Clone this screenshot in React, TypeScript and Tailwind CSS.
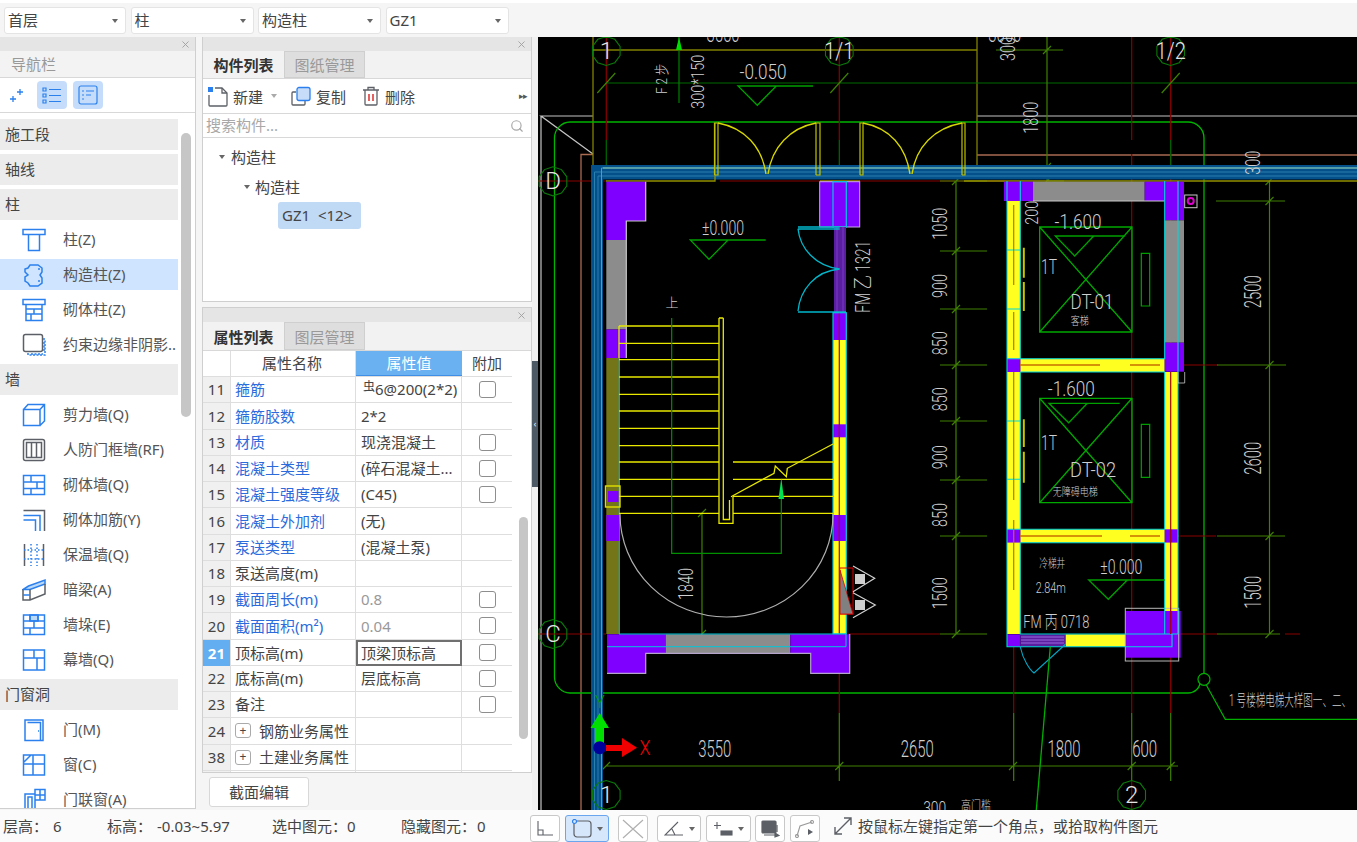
import { X, Search } from "lucide-react";
import type { ReactNode } from "react";

const BLUE = "#2b80ee";
const GREY = "#5c6066";

function Ic({ children }: { children: ReactNode }) {
  return (
    <svg width="24" height="24" viewBox="0 0 24 24" fill="none" stroke={BLUE} strokeWidth="1.5">
      {children}
    </svg>
  );
}

const navIcons: Record<string, ReactNode> = {
  column: <Ic><path d="M1 1.5H23V6.5H1ZM6.5 6.5V22.5H17.5V6.5" /></Ic>,
  gz: <Ic><path d="M8 2H16L20 5V9L18 12L20 15V20L16 23H8L6 20L3 18V14L6 12L3 9V6L6 5Z" /><path d="M16 6H18M16 18H18" /></Ic>,
  brickCol: <Ic><path d="M1 1.5H23V6.5H1ZM4 6.5V22.5H20V6.5M4 11H20M4 16H20M12 11V16M9 16V22" /></Ic>,
  edge: <Ic><rect x="1.5" y="1.5" width="19" height="17" rx="2" stroke={GREY} /><path d="M21 6H23V22H6V20M9 21H21M22 9V19" strokeDasharray="2 1.5" /></Ic>,
  shear: <Ic><path d="M1.5 6.5H18V22.5H1.5ZM1.5 6.5L6 1.5H22.5V18L18 22.5M18 6.5L22.5 1.5" /></Ic>,
  frame: <Ic><rect x="1.5" y="1.5" width="21" height="21" rx="2" stroke={GREY} /><path d="M4.5 4.5H19.5V19.5H4.5ZM9.5 4.5V19.5M14.5 4.5V19.5" stroke={GREY} /></Ic>,
  brick: <Ic><path d="M1.5 2.5H22.5V21.5H1.5ZM1.5 9H22.5M1.5 15.5H22.5M9 2.5V9M15 9V15.5M9 15.5V21.5" /></Ic>,
  rebar: <Ic><path d="M1.5 2.5H22.5V23" stroke={GREY} /><path d="M1.5 7.5H18V23M1.5 12H13.5V23" /></Ic>,
  insul: <Ic><path d="M2.5 1V23M21.5 1V23" stroke={GREY} /><path d="M9 1V23M15 1V23M2 7H22M2 16H22" strokeDasharray="1.5 2" /></Ic>,
  beam: <Ic><path d="M6.5 8L23 2V6L8 11.5H1L6.5 8Z" fill="#bcd9f7" /><path d="M8 11.5V22M1 11.5V22H8L23 16V6" stroke={GREY} /><path d="M1 17H8" /></Ic>,
  pier: <Ic><path d="M8 2H16V8H8Z" fill="#bcd9f7" /><path d="M1.5 2H22.5V21.5H1.5ZM1.5 8H22.5M1.5 15H22.5M8 2V8M16 2V8M12 8V15M8 15V21.5" /></Ic>,
  curtain: <Ic><path d="M1.5 2H22.5V22H1.5ZM1.5 10H22.5M12 2V10M15 10V22" /></Ic>,
  door: <Ic><path d="M3 2H21V22.5H3ZM5.5 4.5H18.5V22.5" /><path d="M16 13H17" /></Ic>,
  window: <Ic><path d="M1.5 2H22.5V22H1.5ZM1.5 11H22.5M11 2V22M2 9L9 2" /></Ic>,
  doorWin: <Ic><path d="M3 24V6H13V24M6 24V9H10V24M13 1.5H23V12H13ZM18 1.5V12M13 7H23" /></Ic>,
};

type NavRow = { label: string; section?: boolean; icon?: string; active?: boolean };

const navRows: NavRow[] = [
  { label: "施工段", section: true },
  { label: "轴线", section: true },
  { label: "柱", section: true },
  { label: "柱(Z)", icon: "column" },
  { label: "构造柱(Z)", icon: "gz", active: true },
  { label: "砌体柱(Z)", icon: "brickCol" },
  { label: "约束边缘非阴影..", icon: "edge" },
  { label: "墙", section: true },
  { label: "剪力墙(Q)", icon: "shear" },
  { label: "人防门框墙(RF)", icon: "frame" },
  { label: "砌体墙(Q)", icon: "brick" },
  { label: "砌体加筋(Y)", icon: "rebar" },
  { label: "保温墙(Q)", icon: "insul" },
  { label: "暗梁(A)", icon: "beam" },
  { label: "墙垛(E)", icon: "pier" },
  { label: "幕墙(Q)", icon: "curtain" },
  { label: "门窗洞", section: true },
  { label: "门(M)", icon: "door" },
  { label: "窗(C)", icon: "window" },
  { label: "门联窗(A)", icon: "doorWin" },
];

type PropRow = {
  no: string;
  name: string;
  link?: boolean;
  value?: ReactNode;
  check?: boolean;
  muted?: boolean;
  expand?: boolean;
  selected?: boolean;
};

const propRows: PropRow[] = [
  { no: "11", name: "箍筋", link: true, check: true, value: <><span className="relative -top-[3px] ml-[2px] text-[12px]">虫</span>6@200(2*2)</> },
  { no: "12", name: "箍筋胶数", link: true, value: "2*2" },
  { no: "13", name: "材质", link: true, value: "现浇混凝土", check: true },
  { no: "14", name: "混凝土类型", link: true, value: "(碎石混凝土...", check: true },
  { no: "15", name: "混凝土强度等级", link: true, value: "(C45)", check: true },
  { no: "16", name: "混凝土外加剂", link: true, value: "(无)" },
  { no: "17", name: "泵送类型", link: true, value: "(混凝土泵)" },
  { no: "18", name: "泵送高度(m)" },
  { no: "19", name: "截面周长(m)", link: true, value: "0.8", check: true, muted: true },
  { no: "20", name: "截面面积(m²)", link: true, value: "0.04", check: true, muted: true },
  { no: "21", name: "顶标高(m)", value: "顶梁顶标高", check: true, selected: true },
  { no: "22", name: "底标高(m)", value: "层底标高", check: true },
  { no: "23", name: "备注", check: true },
  { no: "24", name: "钢筋业务属性", expand: true },
  { no: "38", name: "土建业务属性", expand: true },
];

function Caret({ className = "" }: { className?: string }) {
  return <span className={`inline-block h-0 w-0 border-x-[3.5px] border-t-[4px] border-x-transparent border-t-[#666] ${className}`} />;
}

function Dropdown({ label, width }: { label: string; width: string }) {
  return (
    <div className={`flex h-[27px] items-center justify-between rounded-[3px] border border-[#e4e4e4] bg-white pl-[3px] pr-[7px] text-[15px] text-[#444] ${width}`}>
      <span>{label}</span>
      <Caret />
    </div>
  );
}

function TitleStrip() {
  return (
    <div className="flex h-[14px] shrink-0 items-center justify-end bg-[#e5e5e5] pr-[4px]">
      <X size={11} color="#a0a0a0" />
    </div>
  );
}

function Tabs({ first, second, height }: { first: string; second: string; height: string }) {
  return (
    <div className={`flex shrink-0 items-stretch border-b border-[#d8d8d8] bg-[#f2f2f2] text-[15px] ${height}`}>
      <div className="flex w-[81px] items-center justify-center pt-[2px] font-bold text-[#333]">{first}</div>
      <div className="flex w-[81px] items-center justify-center border border-[#cfcfcf] bg-[#dedede] pt-[2px] text-[#999]">{second}</div>
    </div>
  );
}

function NavPanel() {
  return (
    <div className="flex h-[772px] w-[196px] shrink-0 flex-col border-r border-b border-[#cfcfcf] bg-white">
      <TitleStrip />
      <div className="flex h-[27px] shrink-0 items-center border-b border-[#d8d8d8] bg-[#f3f3f3] pl-[11px] text-[15px] text-[#999]">导航栏</div>
      <div className="flex h-[35px] shrink-0 items-center gap-[6px] border-b border-[#d8d8d8] pl-[8px]">
        <svg width="18" height="18" viewBox="0 0 18 18" stroke={BLUE} strokeWidth="1.3" fill="none">
          <path d="M12 3V9M9 6H15M5 10V16M2 13H8" />
        </svg>
        <div className="ml-[5px] flex h-[28px] w-[30px] items-center justify-center rounded-[4px] bg-[#c5ddfa]">
          <svg width="20" height="18" viewBox="0 0 20 18" stroke={BLUE} strokeWidth="1.2" fill="none">
            <path d="M1 2H4V5H1ZM1 8H4V11H1ZM1 14H4V17H1ZM7 3.5H19M7 9.5H19M7 15.5H19" />
          </svg>
        </div>
        <div className="flex h-[28px] w-[30px] items-center justify-center rounded-[4px] bg-[#c5ddfa]">
          <svg width="20" height="20" viewBox="0 0 20 20" stroke={BLUE} strokeWidth="1.2" fill="none">
            <rect x="1" y="1" width="18" height="18" rx="2" />
            <path d="M4 6H6M8 6H16M4 10H6M8 10H13M4 14H6" />
          </svg>
        </div>
      </div>
      <div className="flex min-h-0 flex-1 overflow-hidden">
        <div className="flex w-[178px] shrink-0 flex-col gap-[4px] pt-[6px]">
          {navRows.map((r) =>
            r.section ? (
              <div key={r.label} className="flex h-[31px] shrink-0 items-center bg-[#ececec] pl-[5px] text-[15px] text-[#444]">{r.label}</div>
            ) : (
              <div key={r.label} className={`flex h-[31px] shrink-0 items-center pl-[22px] text-[15px] text-[#555] ${r.active ? "bg-[#cfe5ff]" : ""}`}>
                {r.icon && navIcons[r.icon]}
                <span className="ml-[17px] whitespace-nowrap">{r.label}</span>
              </div>
            )
          )}
        </div>
        <div className="ml-[3px] mt-[20px] h-[284px] w-[10px] rounded-[5px] bg-[#c6c6c6]" />
      </div>
    </div>
  );
}

function ToolBtn({ icon, label, className = "" }: { icon: ReactNode; label: string; className?: string }) {
  return (
    <div className={`flex items-center gap-[5px] ${className}`}>
      {icon}
      <span className="pt-[2px]">{label}</span>
    </div>
  );
}

function ComponentPanel() {
  return (
    <div className="flex h-[265px] shrink-0 flex-col border border-t-0 border-[#cfcfcf] bg-white">
      <TitleStrip />
      <Tabs first="构件列表" second="图纸管理" height="h-[28px]" />
      <div className="flex h-[35px] shrink-0 items-center border-b border-[#d8d8d8] bg-white pl-[4px] text-[15px] text-[#444]">
        <ToolBtn
          label="新建"
          icon={
            <svg width="21" height="21" viewBox="0 0 21 21" fill="none" stroke={GREY} strokeWidth="1.3">
              <path d="M8 2H15L20 7V19A1 1 0 0 1 19 20H3A1 1 0 0 1 2 19V9" />
              <path d="M15 2V7H20" />
              <rect x="1" y="1" width="5" height="5" fill={BLUE} stroke="none" />
            </svg>
          }
        />
        <Caret className="ml-[8px] !border-t-[#aaa]" />
        <ToolBtn
          className="ml-[14px]"
          label="复制"
          icon={
            <svg width="20" height="20" viewBox="0 0 20 20" fill="none" stroke={GREY} strokeWidth="1.3">
              <path d="M5 6H2A1 1 0 0 0 1 7V18A1 1 0 0 0 2 19H13A1 1 0 0 0 14 18V15" />
              <rect x="6" y="1.5" width="13" height="13" rx="2" fill="#c7dcf8" stroke={BLUE} />
            </svg>
          }
        />
        <ToolBtn
          className="ml-[16px]"
          label="删除"
          icon={
            <svg width="18" height="20" viewBox="0 0 18 20" fill="none" stroke={GREY} strokeWidth="1.3">
              <path d="M1 4H17M6 4V1.5H12V4M3 4V18A1 1 0 0 0 4 19H14A1 1 0 0 0 15 18V4" />
              <path d="M7 8V15M11 8V15" stroke="#e23a3a" strokeWidth="1.6" />
            </svg>
          }
        />
        <div className="ml-auto mr-[2px] flex h-[25px] w-[12px] items-center justify-center rounded-[3px] bg-white text-[9px] tracking-[-1px] text-[#555]">▸▸</div>
      </div>
      <div className="flex h-[24px] shrink-0 items-center justify-between border-b border-[#d8d8d8] pl-[3px] pr-[7px] text-[15px] text-[#a8a8a8]">
        <span>搜索构件...</span>
        <Search size={14} color="#a8a8a8" />
      </div>
      <div className="relative flex-1 pt-[4px] text-[15px] text-[#444]">
        <div className="flex h-[30px] items-center pl-[16px]">
          <Caret className="mr-[6px]" />
          构造柱
        </div>
        <div className="flex h-[30px] items-center pl-[41px]">
          <Caret className="mr-[5px]" />
          构造柱
        </div>
        <div className="ml-[75px] flex h-[27px] w-[83px] items-center rounded-[3px] bg-[#c0d9f5] pl-[4px] whitespace-pre">GZ1  &lt;12&gt;</div>
      </div>
    </div>
  );
}

function PropertyRow({ r }: { r: PropRow }) {
  const active = r.no === "21";
  return (
    <div className="grid h-[26.25px] shrink-0 grid-cols-[28px_125px_106px_50px] border-b border-[#dedede] text-[15px]">
      <div className={`flex items-center justify-end border-r border-[#dedede] pr-[5px] ${active ? "bg-[#62aef0] font-bold text-white" : "bg-[#f0f0f0] text-[#444]"}`}>{r.no}</div>
      <div className={`flex items-center border-r border-[#dedede] pl-[4px] whitespace-nowrap ${r.link ? "text-[#2c6bdc]" : "text-[#444]"}`}>
        {r.expand && (
          <span className="mr-[8px] flex h-[15px] w-[16px] items-center justify-center rounded-[3px] border border-[#aaa] text-[12px] leading-none">+</span>
        )}
        {r.name}
      </div>
      <div className={`flex items-center whitespace-nowrap ${r.muted ? "text-[#999]" : "text-[#444]"} ${r.selected ? "border-2 border-[#707070] pl-[3px]" : "border-r border-[#dedede] pl-[5px]"}`}>{r.value}</div>
      <div className="flex items-center justify-center">
        {r.check && <span className="h-[17px] w-[17px] rounded-[3px] border border-[#8e8e8e] bg-white" />}
      </div>
    </div>
  );
}

function PropertyPanel() {
  return (
    <div className="mt-[5px] flex min-h-0 flex-1 flex-col">
      <div className="flex h-[465px] shrink-0 flex-col border border-[#cfcfcf] border-b-0 bg-white">
        <TitleStrip />
        <Tabs first="属性列表" second="图层管理" height="h-[29px]" />
        <div className="flex min-h-0 flex-1">
          <div className="flex w-[309px] shrink-0 flex-col overflow-hidden">
            <div className="grid h-[26px] shrink-0 grid-cols-[28px_125px_106px_50px] border-b border-[#dedede] text-[15px] text-[#444]">
              <div className="border-r border-[#dedede]" />
              <div className="flex items-center justify-center border-r border-[#dedede] pr-[2px]">属性名称</div>
              <div className="flex items-center justify-center border-b border-[#3f8fe6] bg-[#69b1f1] text-white">属性值</div>
              <div className="flex items-center justify-center">附加</div>
            </div>
            {propRows.map((r) => <PropertyRow key={r.no} r={r} />)}
            <div className="grid flex-1 grid-cols-[28px_125px_106px_50px]">
              <div className="border-r border-[#dedede] bg-[#f0f0f0]" />
              <div className="border-r border-[#dedede]" />
              <div className="border-r border-[#dedede]" />
            </div>
          </div>
          <div className="ml-[7px] mt-[166px] h-[222px] w-[9px] rounded-[5px] bg-[#c6c6c6]" />
        </div>
      </div>
      <div className="border-t border-[#cfcfcf] pl-[7px] pt-[4px]">
        <div className="flex h-[30px] w-[100px] items-center justify-center rounded-[3px] border border-[#d8d8d8] bg-white text-[15px] text-[#444]">截面编辑</div>
      </div>
    </div>
  );
}

function T({ x, y, w, size = 20, rot, fill = "#cfcfcf", children }: { x: number; y: number; w?: number; size?: number; rot?: number; fill?: string; children: ReactNode }) {
  return (
    <text
      x={x}
      y={y}
      textAnchor="middle"
      dominantBaseline="central"
      fontFamily="Roboto,'Noto Sans CJK SC',sans-serif"
      fontWeight={300}
      fontSize={size}
      fill={fill}
      textLength={w}
      lengthAdjust={w ? "spacingAndGlyphs" : undefined}
      transform={rot ? `rotate(${rot} ${x} ${y})` : undefined}
    >
      {children}
    </text>
  );
}

function Bubble({ x, y, label, size = 24, w }: { x: number; y: number; label: string; size?: number; w?: number }) {
  const pts = Array.from({ length: 10 }, (_, i) => {
    const a = (i * Math.PI) / 5 + Math.PI / 10;
    return `${(x + 14.5 * Math.cos(a)).toFixed(1)},${(y + 14.5 * Math.sin(a)).toFixed(1)}`;
  }).join(" ");
  return (
    <>
      <polygon points={pts} fill="none" stroke="#0a7a0a" strokeWidth="1.1" />
      <T x={x} y={y} size={size} w={w} fill="#e4e4e4">{label}</T>
    </>
  );
}

const dimTicks: [number, number][] = [
  [956, 181], [956, 251], [956, 309], [956, 365], [956, 421], [956, 480], [956, 536], [956, 634],
  [1269.5, 181], [1269.5, 201], [1269.5, 365], [1269.5, 536], [1269.5, 634],
  [1047, 50], [1047, 167], [1047, 181],
  [606, 766], [839.3, 766], [1013, 766], [1131.7, 766], [1170.7, 766],
  [702, 513], [702, 634],
];

const stairY = [326, 343.3, 359.7, 377, 394.3, 411, 428.3, 445.7, 462, 479.3, 496.3, 513.3];

function CadCanvas() {
  const ticks = dimTicks.map(([x, y]) => `M${x - 4} ${y + 4}L${x + 4} ${y - 4}`).join("");
  const axisTicks = [606.3, 839.3, 1170.7].map((x) => `M${x - 9} 93L${x + 9} 73`).join("");
  return (
    <svg className="block h-full w-full" viewBox="538 37 819 773" preserveAspectRatio="none">
      <rect x="538" y="37" width="819" height="773" fill="#000" />

      {/* outer guide lines */}
      <path d="M541 810V116H593L541 116L593 154M977 116H1357" fill="none" stroke="#c4c4c4" strokeWidth="1.2" />
      <path d="M581 810V154.5H593M977 155H1357" fill="none" stroke="#a86a50" strokeWidth="1.3" />
      <path d="M593 37V166M977 37V166M593 50H977" fill="none" stroke="#808000" strokeWidth="1.3" />
      <path d="M570 122H1188A16 16 0 0 1 1204 138V673M554.5 138A16 16 0 0 1 570 122M554.5 138V677A16 16 0 0 0 570 693H1188C1195 693 1199 688 1200 684" fill="none" stroke="#00b400" strokeWidth="1.3" />
      <path d="M606 83H1357" fill="none" stroke="#006a00" strokeWidth="1.2" />

      {/* axes */}
      <path d="M606.3 37V140M839.3 37V140M839.3 227V713M1170.7 37V140M1170.7 154V713M1131.7 37V140M1131.7 154V713M1013.7 647V713M538 181H606M720 181H1005M538 634H606M848 634H940M1180 634H1217M1285 634H1300M1178 365H1218M1178 536H1216M1131.7 781V810" fill="none" stroke="#8a0000" strokeWidth="1.2" />
      <path d="M606.3 140V166M839.3 140V166M1170.7 140V166" fill="none" stroke="#006a00" strokeWidth="1.2" />

      {/* dimensions */}
      <path d={`M956 181V634M940 181H987M940 251H987M940 309H987M940 365H987M940 421H987M940 480H987M940 536H987M940 634H987M1269.5 181V634M1216 201H1285M1217 365H1286M1217 536H1285M1217 634H1280M1047 37V181M996 50H1063M1047 181H1064M606 766H1178M839.3 713V781M1013.7 713V781M1131.7 713V781M1170.7 713V781M702 513V634${ticks}`} fill="none" stroke="#3f8000" strokeWidth="1.2" />
      <path d={axisTicks} fill="none" stroke="#3f8000" strokeWidth="1.2" />

      {/* blue band */}
      <path d="M591 165H1357V179.5H603V810H591Z" fill="#04508a" />
      <path d="M594.5 810V172H1357M598 810V176H1357" fill="none" stroke="#2a7fae" strokeWidth="1" />
      <path d="M601.5 810V168H1357" fill="none" stroke="#4a9ec0" strokeWidth="1" />
      <path d="M603 168H1357" fill="none" stroke="#8cc8a8" strokeWidth="0.9" />

      {/* yellow double doors */}
      <path d="M606 181H715V123M820 181H860M964 181H1357" fill="none" stroke="#909000" strokeWidth="1.3" />
      <path d="M714.5 175V123H718V175H714.5M816 175V123H820V175H816M860 175V123H863V175H860M962 175V123H965V175H962" fill="none" stroke="#c0c000" strokeWidth="1.2" />
      <path d="M718 123C745 128 762 147 766 174M768 174C772 147 790 128 816 123M863 123C890 128 906 147 910 174M912 174C916 147 934 128 962 123" fill="none" stroke="#d8d800" strokeWidth="1.3" />

      {/* left stair walls */}
      <path d="M606.3 181.7H645.7V221H626.3V240H606.3Z" fill="#8000ff" />
      <rect x="606.3" y="240" width="20" height="89.5" fill="#8c8c8c" />
      <rect x="606.3" y="329.5" width="20" height="28.5" fill="#8000ff" />
      <path d="M645.7 181.7V221H626.3V358" fill="none" stroke="#c8c8c8" strokeWidth="1.2" />
      <rect x="606.3" y="358" width="13" height="276" fill="#747418" />
      <path d="M619.3 358V634" fill="none" stroke="#00c8dc" strokeWidth="1" />
      <rect x="606.3" y="515" width="13" height="26" fill="#8000ff" />
      <rect x="608" y="491" width="10.5" height="11" fill="#8000ff" />
      <rect x="605.5" y="486" width="14.5" height="21" fill="none" stroke="#e0e000" strokeWidth="1.4" />

      {/* door column */}
      <rect x="819.7" y="181.7" width="40" height="45.3" fill="#8000ff" stroke="#c8a8e8" strokeWidth="1" />
      <rect x="833" y="181.7" width="13.3" height="45.3" fill="none" stroke="#00c8dc" strokeWidth="1.2" />
      <rect x="834" y="227" width="12" height="85" fill="#5a1ea0" />
      <path d="M837 227V312M843 227V312" stroke="#7a3ac8" strokeWidth="1" />
      <path d="M798 227H839.7M798 229H839.7M798 228.7C800 248 815 266 839.7 269C815 271 800 290 798 311M798 312H846" fill="none" stroke="#00b8cc" strokeWidth="1.3" />

      {/* right stair wall */}
      <rect x="833" y="312.7" width="13.3" height="321.3" fill="#ffff20" />
      <rect x="833" y="312.7" width="13.3" height="27.3" fill="#8000ff" />
      <rect x="833" y="424.3" width="13.3" height="13" fill="#8000ff" />
      <rect x="833" y="515" width="13.3" height="26" fill="#8000ff" />
      <path d="M839.3 312V634" stroke="#b40000" strokeWidth="1.2" />
      <rect x="833" y="312.7" width="13.3" height="321.3" fill="none" stroke="#00c8dc" strokeWidth="1.2" />

      {/* stairs */}
      <path d={`${stairY.map((y) => `M619 ${y}H719`).join("")}M733 462H833M733 479.3H833M733 496.3H833M733 513.3H833M619 326V358M719 318V523.3H733V496.5M723.3 318V519.5H729.5V500M719 318H723.3`} fill="none" stroke="#e8e800" strokeWidth="1.3" />
      <path d="M731 496.7L774 473.3L775.3 466L786.3 476.7L787.3 468.3L833 444" fill="none" stroke="#e8e800" strokeWidth="1.3" />
      <path d="M671.7 318V553.3H781.3V490" fill="none" stroke="#009000" strokeWidth="1.2" />
      <path d="M781.3 478L784 499H778.5Z" fill="#00e050" />
      <path d="M620 514A106.5 103 0 0 0 833 514" fill="none" stroke="#b0b0b0" strokeWidth="1.2" />

      {/* door marks */}
      <rect x="839.7" y="568" width="13.3" height="46" fill="none" stroke="#e00000" strokeWidth="1" />
      <path d="M840 570L853 614H840Z" fill="#808080" stroke="#e00000" strokeWidth="0.8" />
      <path d="M853 566L874.7 578.3L853 591.7M853 592.7L875.3 605L853 617.7" fill="none" stroke="#d0d0d0" strokeWidth="1.2" />
      <rect x="855" y="574" width="10" height="10" fill="#cfcfcf" />
      <rect x="855" y="600" width="10" height="10" fill="#cfcfcf" />

      {/* bottom stair wall */}
      <path d="M607 634.3H665.7V653.3H645.7V673.3H607Z" fill="#8000ff" />
      <rect x="665.7" y="634.3" width="124.6" height="19" fill="#8c8c8c" />
      <path d="M790.3 634.3H849.7V673.3H810.7V653.3H790.3Z" fill="#8000ff" />
      <path d="M607 673.3H645.7V653.3H810.7V673.3H849.7V634" fill="none" stroke="#b4a4cc" strokeWidth="1.2" />
      <path d="M607 646.7H846V634" fill="none" stroke="#00c8dc" strokeWidth="1" />
      <path d="M619 634H846" fill="none" stroke="#00c8dc" strokeWidth="1.2" />

      {/* lift shaft */}
      <rect x="1007" y="201" width="13.3" height="433" fill="#ffff20" />
      <rect x="1164.7" y="372" width="13.3" height="262" fill="#ffff20" />
      <rect x="1020.3" y="358.7" width="144.4" height="13.3" fill="#ffff20" />
      <rect x="1020.3" y="529.3" width="144.4" height="13.3" fill="#ffff20" />
      <rect x="1004" y="181.7" width="29" height="19.3" fill="#8000ff" />
      <rect x="1033" y="181.7" width="111.7" height="19.3" fill="#8c8c8c" />
      <rect x="1144.7" y="181.7" width="39.3" height="19.3" fill="#8000ff" />
      <rect x="1164.7" y="201" width="19.3" height="19.3" fill="#8000ff" />
      <rect x="1164.7" y="220.3" width="19.3" height="122.4" fill="#8c8c8c" />
      <rect x="1164.7" y="342.7" width="19.3" height="29" fill="#8000ff" />
      <rect x="1007" y="358.7" width="13.3" height="13.3" fill="#8000ff" />
      <rect x="1007" y="529.3" width="13.3" height="13.3" fill="#8000ff" />
      <rect x="1164.7" y="529.3" width="13.3" height="13.3" fill="#8000ff" />
      <rect x="1007" y="634.3" width="13.3" height="12.4" fill="#8000ff" />
      <rect x="1020.3" y="634.3" width="45.4" height="12.4" fill="#5a1ea0" />
      <path d="M1021 637H1064M1021 640H1064M1021 643H1064" stroke="#9a6ae0" strokeWidth="1" />
      <rect x="1065.7" y="634.3" width="59.6" height="12.4" fill="#ffff20" />
      <rect x="1125.3" y="611" width="55.4" height="46.7" fill="#8000ff" />
      <rect x="1125.3" y="608.3" width="53.4" height="52.7" fill="none" stroke="#b8b8b8" strokeWidth="1" />
      <path d="M1033 201H1164.7" stroke="#c8c8c8" strokeWidth="1" />
      <path d="M1007 181V646.7H1172V634M1020.3 181V358.7H1164.7V181M1178 181V634M1007 250H1020.3M1007 309H1020.3M1007 421H1020.3M1007 479.3H1020.3M1020.3 372H1164.7V529.3H1020.3V372M1020.3 542.7H1164.7V634M1020.3 542.7V634H1178M1007 358.7H1020.3M1007 529.3H1020.3" fill="none" stroke="#00d8dc" strokeWidth="1.1" />
      <path d="M1178 372V383H1184.7V372" fill="none" stroke="#c8c8c8" strokeWidth="0.8" />
      <path d="M1013.7 205V285M1013.7 312V350M1013.7 372V500M1013.7 520V590" fill="none" stroke="#c87000" strokeWidth="1.2" />
      <path d="M1020 365H1100M1130 365H1160M1020 536H1102M1130 536H1160" fill="none" stroke="#c87000" strokeWidth="1.5" />
      <path d="M1170.7 372V634" stroke="#a00000" strokeWidth="1.2" />
      <path d="M1020.3 647C1023 660 1030 670 1034 673L1065.7 644" fill="none" stroke="#00a8c8" strokeWidth="1.1" />
      <path d="M1050.3 646.7L1036.3 810" fill="none" stroke="#00b000" strokeWidth="1.3" />
      <path d="M1023.8 247.7V277.7M1023.8 282V311M1023.8 419.3V447M1023.8 451.7V482.7" stroke="#c8c800" strokeWidth="2" />

      {/* lift cars */}
      <path d="M1039.7 227H1132V332H1039.7ZM1039.7 227L1132 332M1132 227L1039.7 332M1039.7 398.3H1132V502.7H1039.7ZM1039.7 398.3L1132 502.7M1132 398.3L1039.7 502.7" fill="none" stroke="#00a800" strokeWidth="1.3" />
      <path d="M1141.3 253.3H1149.7V306H1141.3ZM1141.3 424.3H1149.7V477.3H1141.3Z" fill="none" stroke="#00a000" strokeWidth="1.2" />

      {/* level marks */}
      <path d="M1124.7 236H1055.3L1074.7 256L1093.7 236M1119.7 403.3H1049L1068.7 422.7L1087.3 403.3M1164.7 580H1088.7L1108.3 599.3L1127.3 580M813 86H738L757.3 105.3L776.3 86M765.7 240H690.3L709 259.3L728 240" fill="none" stroke="#00a000" strokeWidth="1.3" />

      {/* leader */}
      <circle cx="1204" cy="679.3" r="6" fill="none" stroke="#00b000" strokeWidth="1.2" />
      <path d="M1206.3 685L1225.3 719.3H1357" fill="none" stroke="#00b000" strokeWidth="1.2" />
      <rect x="1184.7" y="195" width="12.3" height="12.7" fill="none" stroke="#c8c8c8" strokeWidth="1" />
      <circle cx="1190.7" cy="201" r="3" fill="none" stroke="#e000d0" strokeWidth="2" />

      {/* top arrow */}
      <path d="M679 37V103" stroke="#008000" strokeWidth="1.2" />
      <path d="M679 37L682 50H676Z" fill="#00e000" />

      {/* ucs */}
      <path d="M595 745H604V728H609L599.7 713L590.5 728H595Z" fill="#00e000" />
      <path d="M606 745H622V738L637 747.7L622 757V751H606Z" fill="#f00000" />
      <circle cx="599.7" cy="747.7" r="6.5" fill="#00009c" />
      <T x={645} y={747.7} size={20} w={11} fill="#f00000">X</T>
      <T x={599.7} y={701} size={19} w={10} fill="#00a000">Y</T>

      <Bubble x={606.3} y={51} label="1" />
      <Bubble x={839.3} y={51} label="1/1" w={30} />
      <Bubble x={1170.7} y={51} label="1/2" w={30} />
      <Bubble x={553} y={181.3} label="D" />
      <Bubble x={553} y={634} label="C" />
      <Bubble x={606.3} y={795} label="1" />
      <Bubble x={1131.7} y={795} label="2" />

      {/* dim text */}
      <T x={723} y={34} w={33} size={23}>3550</T>
      <T x={1004.7} y={34} w={33} size={23}>3050</T>
      <T x={1008} y={49} w={24} size={21} rot={-90}>300</T>
      <T x={763} y={72} w={47} size={21}>-0.050</T>
      <T x={723} y={228} w={42} size={20}>±0.000</T>
      <T x={697.3} y={81.7} w={54} size={18} rot={-90}>300*150</T>
      <T x={662} y={78.7} w={30} size={15} rot={-90}>F 2 步</T>
      <T x={863} y={276.7} w={72} size={20} rot={-90}>FM 乙 1321</T>
      <T x={672} y={302} size={13}>上</T>
      <T x={686} y={584} w={32} size={21} rot={-90}>1840</T>
      <T x={1031} y={117.7} w={32} size={21} rot={-90}>1800</T>
      <T x={1253} y={162.7} w={24} size={21} rot={-90}>300</T>
      <T x={1253.7} y={291.7} w={33} size={23} rot={-90}>2500</T>
      <T x={1253.7} y={458.3} w={33} size={23} rot={-90}>2600</T>
      <T x={1253.7} y={592.3} w={33} size={23} rot={-90}>1500</T>
      {([[223.7, "1050", 32], [286, "900", 24], [343.3, "850", 24], [399.3, "850", 24], [457.3, "900", 24], [515, "850", 24], [593.3, "1500", 32]] as [number, string, number][]).map(([y, s, w]) => (
        <T key={y} x={939.7} y={y} w={w} size={21} rot={-90}>{s}</T>
      ))}
      <T x={714.7} y={749.3} w={33} size={23}>3550</T>
      <T x={917.3} y={749.3} w={33} size={23}>2650</T>
      <T x={1064} y={749.3} w={33} size={23}>1800</T>
      <T x={1144.7} y={749.3} w={25} size={23}>600</T>
      <T x={1031.3} y={212.7} w={24} size={19} rot={-90}>200</T>
      <T x={1078} y={222} w={47} size={21}>-1.600</T>
      <T x={1071.3} y={388.7} w={47} size={21}>-1.600</T>
      <T x={1049} y={266.7} w={16} size={21}>1T</T>
      <T x={1049} y={442.7} w={16} size={21}>1T</T>
      <T x={1092} y={301.7} w={43} size={21}>DT-01</T>
      <T x={1093} y={470} w={46} size={21}>DT-02</T>
      <T x={1079.7} y={321.7} w={18} size={11}>客梯</T>
      <T x={1075.3} y={492.3} w={45} size={11}>无障碍电梯</T>
      <T x={1052.3} y={564} w={26} size={12}>冷梯井</T>
      <T x={1050.7} y={587.7} w={30} size={15}>2.84m</T>
      <T x={1121.3} y={567.3} w={42} size={20}>±0.000</T>
      <T x={1056.3} y={621} w={66} size={18}>FM 丙 0718</T>
      <T x={1290} y={700.7} w={122} size={16}>1 号楼梯电梯大样图一、二、</T>
      <T x={934.7} y={807} w={23} size={19}>300</T>
      <T x={976} y={806} w={30} size={12}>高门槛</T>
    </svg>
  );
}

function StatusBtn({ children, w, active }: { children: ReactNode; w: string; active?: boolean }) {
  return (
    <div className={`flex h-[27px] items-center justify-center gap-[5px] rounded-[3px] border ${active ? "border-[#6aa6ee] bg-[#d6e7fb]" : "border-[#c8c8c8] bg-white"} ${w}`}>
      {children}
    </div>
  );
}

function StatusBar() {
  return (
    <div className="flex h-[32px] shrink-0 items-center bg-[#fbfbfb] pl-[3px] text-[15px] text-[#444]">
      <span className="w-[50px] whitespace-nowrap">{"层高\uFF1A"}</span>
      <span className="w-[54px]">6</span>
      <span className="w-[50px] whitespace-nowrap">{"标高\uFF1A"}</span>
      <span className="w-[115px] whitespace-nowrap">-0.03~5.97</span>
      <span className="w-[75px] whitespace-nowrap">{"选中图元\uFF1A"}</span>
      <span className="w-[54px]">0</span>
      <span className="w-[76px] whitespace-nowrap">{"隐藏图元\uFF1A"}</span>
      <span className="w-[53px]">0</span>
      <div className="flex items-end pt-[5px]">
        <StatusBtn w="w-[30px]">
          <svg width="18" height="16" viewBox="0 0 18 16" fill="none" stroke={GREY} strokeWidth="1.1"><path d="M2 0V14H17M2 9H7V14" /></svg>
        </StatusBtn>
        <div className="ml-[5px]">
          <StatusBtn w="w-[44px]" active>
            <svg width="20" height="19" viewBox="0 0 20 19" fill="none" stroke={GREY} strokeWidth="1.2"><rect x="2" y="2" width="17" height="16" rx="3" /><circle cx="2.5" cy="2.5" r="2" fill="#d6e7fb" stroke={BLUE} /></svg>
            <Caret />
          </StatusBtn>
        </div>
        <div className="ml-[9px]">
          <StatusBtn w="w-[30px]">
            <svg width="22" height="20" viewBox="0 0 22 20" fill="none" stroke="#b0b0b0" strokeWidth="1.2"><path d="M1 1L21 19M21 1L1 19" /></svg>
          </StatusBtn>
        </div>
        <div className="ml-[9px]">
          <StatusBtn w="w-[44px]">
            <svg width="20" height="16" viewBox="0 0 20 16" fill="none" stroke={GREY} strokeWidth="1.1"><path d="M14 1L1 14H19M8 8L11 14" /></svg>
            <Caret />
          </StatusBtn>
        </div>
        <div className="ml-[5px]">
          <StatusBtn w="w-[45px]">
            <svg width="20" height="16" viewBox="0 0 20 16" fill="none" stroke={GREY} strokeWidth="1.1"><path d="M4 1V8M1 4.5H8" /><rect x="8" y="10" width="11" height="4" fill={GREY} /></svg>
            <Caret />
          </StatusBtn>
        </div>
        <div className="ml-[4px]">
          <StatusBtn w="w-[30px]">
            <svg width="20" height="18" viewBox="0 0 20 18" fill="none" stroke={GREY} strokeWidth="1.2"><rect x="2" y="1" width="14" height="12" rx="1" fill={GREY} /><path d="M4 15H15M17 5V12" /><path d="M15 13L19 15.5L15 17Z" fill={GREY} /></svg>
          </StatusBtn>
        </div>
        <div className="ml-[5px]">
          <StatusBtn w="w-[30px]">
            <svg width="20" height="18" viewBox="0 0 20 18" fill="none" stroke="#9a9a9a" strokeWidth="1.1"><path d="M2 16L5 6L17 2" /><circle cx="2" cy="16" r="1.5" /><circle cx="17" cy="2" r="1.5" /><path d="M13 9L18 12L13 15Z" fill={GREY} stroke="none" /></svg>
          </StatusBtn>
        </div>
      </div>
      <svg className="ml-[13px]" width="20" height="20" viewBox="0 0 20 20" fill="none" stroke={GREY} strokeWidth="1.4"><path d="M2 18L18 2M11 2H18V9M2 11V18H9" /></svg>
      <span className="ml-[5px] whitespace-nowrap">{"按鼠标左键指定第一个角点\uFF0C或拾取构件图元"}</span>
    </div>
  );
}

export default function App() {
  return (
    <div className="flex h-[842px] w-[1357px] flex-col overflow-hidden bg-[#f5f5f5] font-['Noto_Sans','Noto_Sans_CJK_SC',sans-serif]">
      <div className="flex h-[37px] shrink-0 items-center gap-[4.5px] border-t-[3px] border-white pl-[4px] pt-[1px]">
        <Dropdown label="首层" width="w-[122px]" />
        <Dropdown label="柱" width="w-[123px]" />
        <Dropdown label="构造柱" width="w-[123px]" />
        <Dropdown label="GZ1" width="w-[123px]" />
      </div>
      <div className="flex h-[773px] shrink-0">
        <NavPanel />
        <div className="ml-[6px] flex w-[330px] shrink-0 flex-col">
          <ComponentPanel />
          <PropertyPanel />
        </div>
        <div className="flex w-[6px] shrink-0 flex-col bg-[#f0f0f0] pt-[324px]">
          <div className="flex h-[126px] items-center justify-center bg-[#4d5a66] text-[8px] text-white">‹</div>
        </div>
        <div className="min-w-0 flex-1">
          <CadCanvas />
        </div>
      </div>
      <StatusBar />
    </div>
  );
}
